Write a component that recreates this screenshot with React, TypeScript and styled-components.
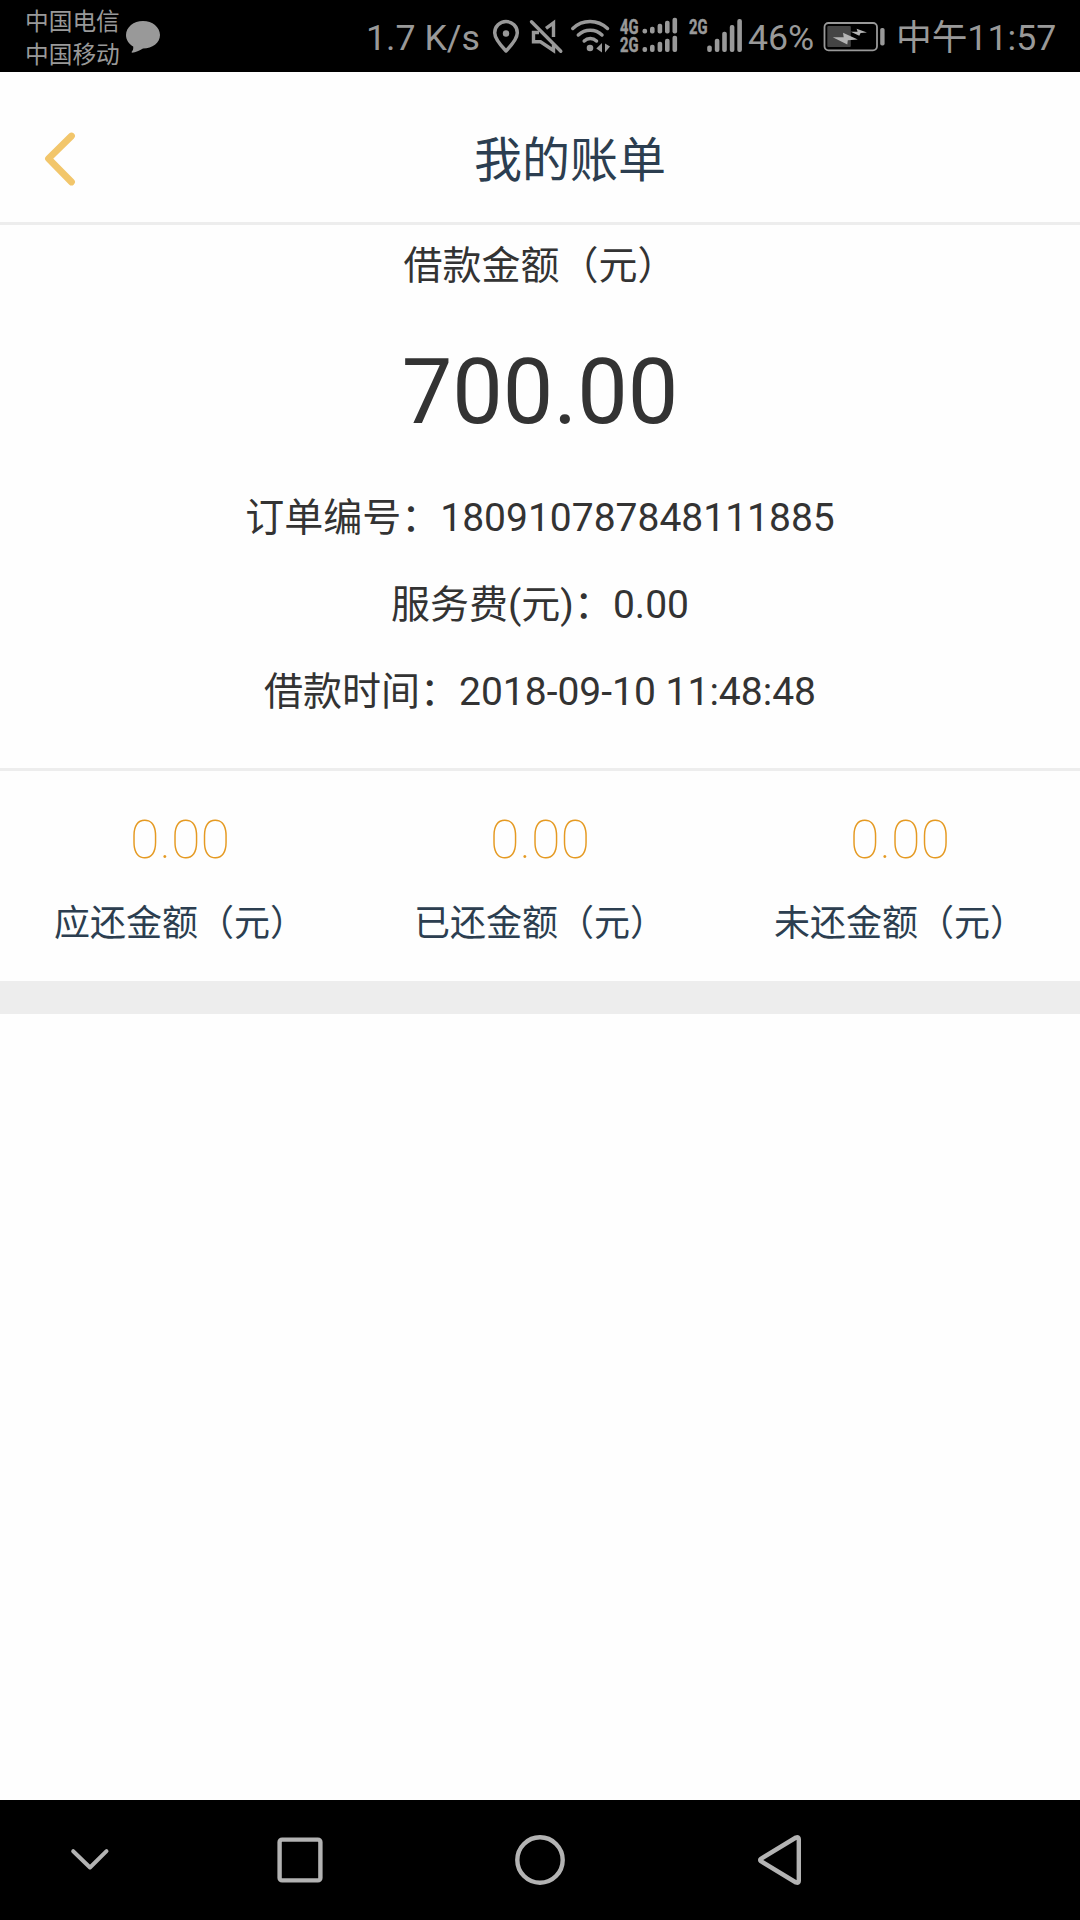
import React from "react";
import styled, { createGlobalStyle } from "styled-components";

const GlobalStyle = createGlobalStyle`
  *, *::before, *::after { box-sizing: border-box; }
  body {
    margin: 0;
    background: #fff;
    font-family: Roboto, "Noto Sans CJK SC", sans-serif;
  }
`;

const STATUS_GRAY = "#999";
const NAV_GRAY = "#b3b3b3";

const Screen = styled.div`
  width: 1080px;
  height: 1920px;
  display: flex;
  flex-direction: column;
  background: #fefefe;
  overflow: hidden;
`;

const StatusBar = styled.header`
  flex: none;
  height: 72px;
  display: flex;
  align-items: flex-start;
  background: #000;
  color: ${STATUS_GRAY};
  white-space: nowrap;
`;

const Carriers = styled.div`
  width: 122px;
  padding: 6px 0 0 25px;
  display: flex;
  flex-direction: column;
  font-size: 23.7px;
  line-height: 33px;
`;

const StatusText = styled.span<{ $width: number }>`
  width: ${(p) => p.$width}px;
  flex: none;
  padding-top: 4px;
  font-size: 35.7px;
  line-height: 69px;
`;

const StatusIcon = styled.svg`
  flex: none;
  display: block;
  height: 72px;
`;

const NetworkLabel = styled.text`
  font-family: Roboto, sans-serif;
  font-weight: 700;
  font-size: 20.5px;
  fill: ${STATUS_GRAY};
  stroke: ${STATUS_GRAY};
  stroke-width: 0.5px;
`;

const TitleBar = styled.div`
  flex: none;
  height: 153px;
  padding-top: 27px;
  border-bottom: 3px solid #ededed;
  display: flex;
`;

const BackButton = styled.button`
  width: 60px;
  padding: 0;
  border: 0;
  background: none;
  overflow: visible;
`;

const BackIcon = styled.svg`
  display: block;
  width: 80px;
  height: 120px;
`;

const Title = styled.h1`
  flex: 1;
  margin: 0;
  text-align: center;
  font-size: 48px;
  font-weight: 400;
  line-height: 124px;
  color: #2c3e50;
`;

const Summary = styled.section`
  flex: none;
  height: 546px;
  padding-top: 1px;
  border-bottom: 3px solid #ededed;
  display: flex;
  flex-direction: column;
  text-align: center;
  color: #333;
`;

const SummaryLabel = styled.div`
  font-size: 39px;
  line-height: 81px;
`;

const Amount = styled.div`
  height: 168px;
  padding-top: 4px;
  font-size: 90px;
  line-height: 164px;
`;

const Detail = styled.div`
  font-size: 39px;
  line-height: 87px;
`;

const Stats = styled.section`
  flex: none;
  height: 243px;
  padding-top: 29px;
  border-bottom: 33px solid #ededed;
  display: grid;
  grid-template-columns: repeat(3, 1fr);
  text-align: center;
`;

const StatValue = styled.div`
  font-size: 54px;
  font-weight: 100;
  line-height: 80px;
  color: #e59a22;
`;

const StatLabel = styled.div`
  font-size: 36px;
  line-height: 89px;
  color: #2c3e50;
`;

const NavBar = styled.nav`
  flex: none;
  height: 120px;
  margin-top: auto;
  display: grid;
  grid-template-columns: 180px 240px 240px 240px 180px;
  align-items: center;
  justify-items: center;
  background: #000;
`;

const NavIcon = styled.svg`
  display: block;
  width: 60px;
  height: 60px;
  fill: none;
  stroke: ${NAV_GRAY};
  stroke-width: 4.4;
  stroke-linecap: round;
  stroke-linejoin: round;
`;

type Bar = { x: number; top: number };

const SignalBars = ({ bars, bottom }: { bars: Bar[]; bottom: number }) => (
  <>
    {bars.map((b) => (
      <rect key={b.x} x={b.x} y={b.top} width={4.6} height={bottom - b.top} rx={2} fill={STATUS_GRAY} />
    ))}
  </>
);

const row1: Bar[] = [
  { x: 642.5, top: 28.8 }, { x: 650, top: 26.7 }, { x: 657.6, top: 23.7 },
  { x: 665, top: 20.7 }, { x: 672.5, top: 17.7 },
];
const row2: Bar[] = [
  { x: 642.5, top: 47 }, { x: 650, top: 44.7 }, { x: 657.6, top: 41.7 },
  { x: 665, top: 38.7 }, { x: 672.5, top: 35.7 },
];
const sim2: Bar[] = [
  { x: 707.2, top: 45.5 }, { x: 714.8, top: 38.7 }, { x: 722.2, top: 31.8 },
  { x: 729.8, top: 25 }, { x: 737.3, top: 19 },
];

const stats = [
  { value: "0.00", label: "应还金额（元）" },
  { value: "0.00", label: "已还金额（元）" },
  { value: "0.00", label: "未还金额（元）" },
];

export default function App() {
  return (
    <Screen>
      <GlobalStyle />
      <StatusBar>
        <Carriers>
          <span>中国电信</span>
          <span>中国移动</span>
        </Carriers>
        <StatusIcon width={244} viewBox="122 0 244 72" fill={STATUS_GRAY}>
          <path d="M143 21c9.400 0 17 6.200 17 14s-7.600 13.600-17 13.600c-3.500 2-7.300 4-11 4.200-.8-.5-.1-1.300.6-2.200.6-1 .8-2.300.6-4.100C128.700 44 126 39.800 126 35c0-7.800 7.600-14 17-14z" />
        </StatusIcon>
        <StatusText $width={122}>1.7 K/s</StatusText>
        <StatusIcon width={36} viewBox="488 0 36 72" fill="none" stroke={STATUS_GRAY}>
          <path d="M506 51C500.500 45.300 494.700 39 494.700 32.800a11.300 11.300 0 0 1 22.600 0C517.300 39 511.500 45.300 506 51z" strokeWidth={3.5} strokeLinejoin="round" />
          <circle cx={506} cy={33.500} r={3.200} fill={STATUS_GRAY} stroke="none" />
        </StatusIcon>
        <StatusIcon width={44} viewBox="524 0 44 72" fill="none" stroke={STATUS_GRAY} strokeWidth={3.4}>
          <path d="M546 28.300L553.500 22.800V37M539 32.500H533.500V41.800H540.500L553.500 50.500V45" />
          <path d="M531.500 21.800L560.800 51.200" strokeLinecap="round" />
        </StatusIcon>
        <StatusIcon width={48} viewBox="568 0 48 72" fill="none" stroke={STATUS_GRAY} strokeWidth={3.5} strokeLinecap="round">
          <path d="M572.800 28.500C582.500 19.200 597.500 19.200 607.500 28.500M578.300 35C585 28.600 595.500 28.600 602 35M584.200 41C587.500 37.800 593 37.800 596.500 41" />
          <circle cx={590} cy={48} r={3.300} fill={STATUS_GRAY} stroke="none" />
          <path d="M602 43v9.500l-5.700-4zM605 43.500l5 3-5 6z" fill={STATUS_GRAY} stroke="none" />
        </StatusIcon>
        <StatusIcon width={132} viewBox="616 0 132 72">
          <NetworkLabel x={620} y={33.600} textLength={18.500} lengthAdjust="spacingAndGlyphs">4G</NetworkLabel>
          <NetworkLabel x={620} y={51.700} textLength={18.500} lengthAdjust="spacingAndGlyphs">2G</NetworkLabel>
          <SignalBars bars={row1} bottom={33.6} />
          <SignalBars bars={row2} bottom={52} />
          <NetworkLabel x={689} y={33.600} textLength={18.500} lengthAdjust="spacingAndGlyphs">2G</NetworkLabel>
          <SignalBars bars={sim2} bottom={52} />
        </StatusIcon>
        <StatusText $width={70}>46%</StatusText>
        <StatusIcon width={78} viewBox="818 0 78 72">
          <rect x={824.5} y={23} width={52.500} height={27.300} rx={4} fill="none" stroke={STATUS_GRAY} strokeWidth={1.800} />
          <rect x={827.3} y={26} width={23.500} height={21} rx={1} fill="#444" />
          <rect x={880.2} y={28} width={4.400} height={17.600} rx={1.800} fill={STATUS_GRAY} />
          <path d="M832.700 37.300L843.700 37.200 843 32.800 857.800 39.500 847.800 40.300 847.300 44.500z" fill="#b3b3b3" />
          <path d="M850.700 31.800L857.600 31.700 856.600 28.700 867 32.400 860.600 33 859.300 35.800z" fill="#b3b3b3" />
        </StatusIcon>
        <StatusText $width={184}>中午11:57</StatusText>
      </StatusBar>

      <TitleBar>
        <BackButton aria-label="返回">
          <BackIcon viewBox="0 101 80 120" fill="none" stroke="#f2c66b" strokeWidth={6.800} strokeLinecap="round" strokeLinejoin="round">
            <path d="M71.500 136L48.500 158.700 71.500 182" />
          </BackIcon>
        </BackButton>
        <Title>我的账单</Title>
      </TitleBar>

      <Summary>
        <SummaryLabel>借款金额（元）</SummaryLabel>
        <Amount>700.00</Amount>
        <Detail>订单编号：180910787848111885</Detail>
        <Detail>服务费(元)：0.00</Detail>
        <Detail>借款时间：2018-09-10 11:48:48</Detail>
      </Summary>

      <Stats>
        {stats.map((s) => (
          <div key={s.label}>
            <StatValue>{s.value}</StatValue>
            <StatLabel>{s.label}</StatLabel>
          </div>
        ))}
      </Stats>

      <NavBar>
        <NavIcon viewBox="60 1830 60 60">
          <path d="M73.200 1851.200L90 1867.500 106.500 1851.200" strokeWidth={4} />
        </NavIcon>
        <NavIcon viewBox="270 1830 60 60">
          <rect x={279.6} y={1839.600} width={40.800} height={40.800} rx={2.500} />
        </NavIcon>
        <NavIcon viewBox="510 1830 60 60">
          <circle cx={540} cy={1860} r={22.700} />
        </NavIcon>
        <NavIcon viewBox="750 1830 60 60">
          <path d="M760.800 1858.800L796 1837.500Q798.800 1836.500 798.800 1839V1881Q798.800 1883.500 796 1882.500L760.800 1861.200Q759.500 1860 760.800 1858.800Z" />
        </NavIcon>
      </NavBar>
    </Screen>
  );
}
